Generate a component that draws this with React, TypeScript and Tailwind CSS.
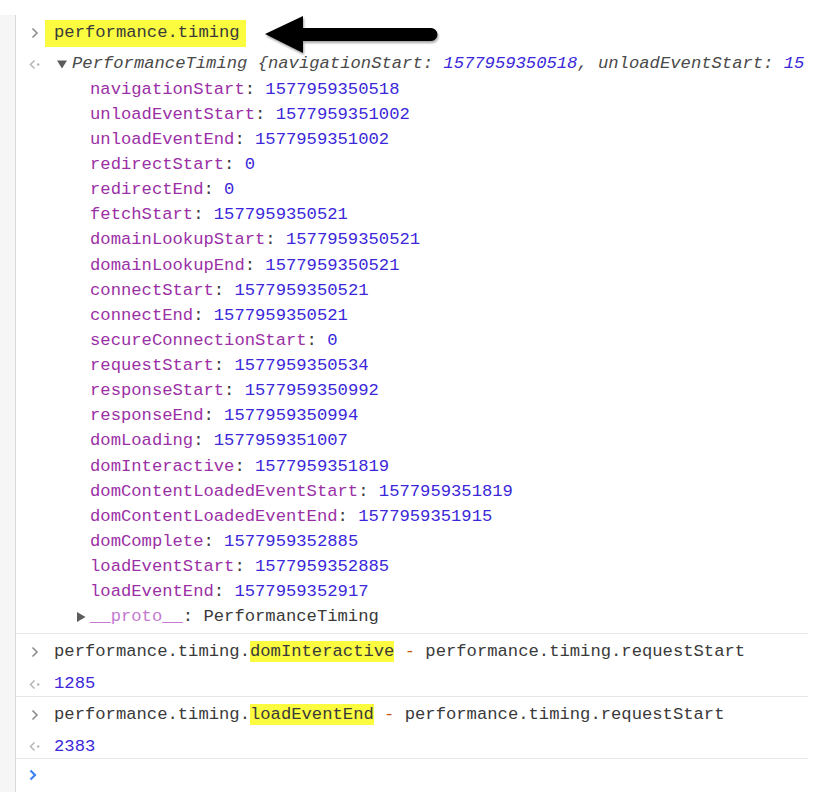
import React from 'react'

const mono = "font-['Liberation_Mono',monospace]"

const timing: [string, string][] = [
  ['navigationStart', '1577959350518'],
  ['unloadEventStart', '1577959351002'],
  ['unloadEventEnd', '1577959351002'],
  ['redirectStart', '0'],
  ['redirectEnd', '0'],
  ['fetchStart', '1577959350521'],
  ['domainLookupStart', '1577959350521'],
  ['domainLookupEnd', '1577959350521'],
  ['connectStart', '1577959350521'],
  ['connectEnd', '1577959350521'],
  ['secureConnectionStart', '0'],
  ['requestStart', '1577959350534'],
  ['responseStart', '1577959350992'],
  ['responseEnd', '1577959350994'],
  ['domLoading', '1577959351007'],
  ['domInteractive', '1577959351819'],
  ['domContentLoadedEventStart', '1577959351819'],
  ['domContentLoadedEventEnd', '1577959351915'],
  ['domComplete', '1577959352885'],
  ['loadEventStart', '1577959352885'],
  ['loadEventEnd', '1577959352917'],
]

function PromptIcon({ blue }: { blue?: boolean }) {
  return (
    <svg width="8" height="12" viewBox="0 0 8 12" className={blue ? 'text-[#3b82f6]' : 'text-[#8c8c8c]'}>
      <path d="M1.5 1.5 L6 6 L1.5 10.5" fill="none" stroke="currentColor" strokeWidth={blue ? 2.2 : 1.6} />
    </svg>
  )
}

function ResultIcon() {
  return (
    <svg width="12" height="11" viewBox="0 0 12 11" className="text-[#b8b8b8]">
      <path d="M5.5 1.5 L1.5 5.5 L5.5 9.5" fill="none" stroke="currentColor" strokeWidth="1.6" />
      <circle cx="9.2" cy="5.5" r="1.3" fill="currentColor" />
    </svg>
  )
}

function Tri({ down }: { down?: boolean }) {
  return (
    <svg width="10" height="10" viewBox="0 0 10 10" className="text-[#5c5c5c] shrink-0">
      {down ? <path d="M0 1.5 L10 1.5 L5 9.5 Z" fill="currentColor" /> : <path d="M1 0 L9.5 5 L1 10 Z" fill="currentColor" />}
    </svg>
  )
}

function Gutter({ children }: { children: React.ReactNode }) {
  return <div className="w-[38px] shrink-0 flex items-center pl-[13px]">{children}</div>
}

function Minus() {
  return <span className="text-[#c4570e]">-</span>
}

export default function App() {
  return (
    <div className="w-[838px] h-[800px] bg-white pt-[15px]">
      <div className={`relative w-[808px] h-[777px] flex overflow-hidden text-[17.2px] ${mono}`}>
        <div className="w-[16px] shrink-0 bg-[#f6f6f6] border-r border-[#d8d8d8]" />

        <div className="flex-1 min-w-0 whitespace-nowrap text-[#3a3a3a]">
          {/* entry 1 */}
          <div className="pb-[3px] border-b border-[#e6e6e6]">
            <div className="h-[36px] flex items-center">
              <Gutter>
                <span className="ml-[2px]"><PromptIcon /></span>
              </Gutter>
              <span className="-ml-[9px] h-[27px] flex items-center pl-[9px] pr-[6px] bg-[#fbfb3f]">performance.timing</span>
            </div>
            <div className="h-[26px] flex items-center">
              <Gutter>
                <ResultIcon />
              </Gutter>
              <span className="ml-[3px] mr-[5px] flex items-center"><Tri down /></span>
              <span className="italic text-[#4a4a4a]">
                PerformanceTiming {'{'}navigationStart: <span className="text-[#3b27d9]">1577959350518</span>, unloadEventStart: <span className="text-[#3b27d9]">15</span>
              </span>
            </div>
            <div className="pl-[74px]">
              {timing.map(([k, v]) => (
                <div key={k} className="h-[25.14px] flex items-center">
                  <span className="text-[#9b30a6]">{k}</span>
                  <span className="text-[#3a3a3a]">:&nbsp;</span>
                  <span className="text-[#3b27d9]">{v}</span>
                </div>
              ))}
              <div className="h-[25.14px] flex items-center -ml-[14px]">
                <span className="mr-[4px] flex items-center"><Tri /></span>
                <span className="text-[#c47ad0]">__proto__</span>
                <span>:&nbsp;PerformanceTiming</span>
              </div>
            </div>
          </div>

          {/* entry 2 */}
          <div className="border-b border-[#e6e6e6]">
            <div className="h-[34px] pt-[3px] flex items-center">
              <Gutter>
                <span className="ml-[2px]"><PromptIcon /></span>
              </Gutter>
              <span>
                performance.timing.<span className="bg-[#fbfb3f] py-[1px]">domInteractive</span> <Minus /> performance.timing.requestStart
              </span>
            </div>
            <div className="h-[28px] pt-[5px] flex items-center">
              <Gutter>
                <ResultIcon />
              </Gutter>
              <span className="text-[#3b27d9]">1285</span>
            </div>
          </div>

          {/* entry 3 */}
          <div className="border-b border-[#e6e6e6]">
            <div className="h-[34px] pt-[3px] flex items-center">
              <Gutter>
                <span className="ml-[2px]"><PromptIcon /></span>
              </Gutter>
              <span>
                performance.timing.<span className="bg-[#fbfb3f] py-[1px]">loadEventEnd</span> <Minus /> performance.timing.requestStart
              </span>
            </div>
            <div className="h-[27px] pt-[5px] flex items-center">
              <Gutter>
                <ResultIcon />
              </Gutter>
              <span className="text-[#3b27d9]">2383</span>
            </div>
          </div>

          {/* prompt */}
          <div className="h-[32px] flex items-center">
            <Gutter>
              <PromptIcon blue />
            </Gutter>
          </div>
        </div>

        {/* annotation arrow */}
        <svg className="absolute left-[262px] top-0 drop-shadow-[1px_2px_1px_rgba(0,0,0,0.35)]" width="182" height="42" viewBox="0 0 182 42">
          <path d="M3 19 L41 1 L41 13 L169 13 A6.5 6.5 0 0 1 169 26 L41 26 L41 38 Z" fill="#000" />
        </svg>
      </div>
    </div>
  )
}
